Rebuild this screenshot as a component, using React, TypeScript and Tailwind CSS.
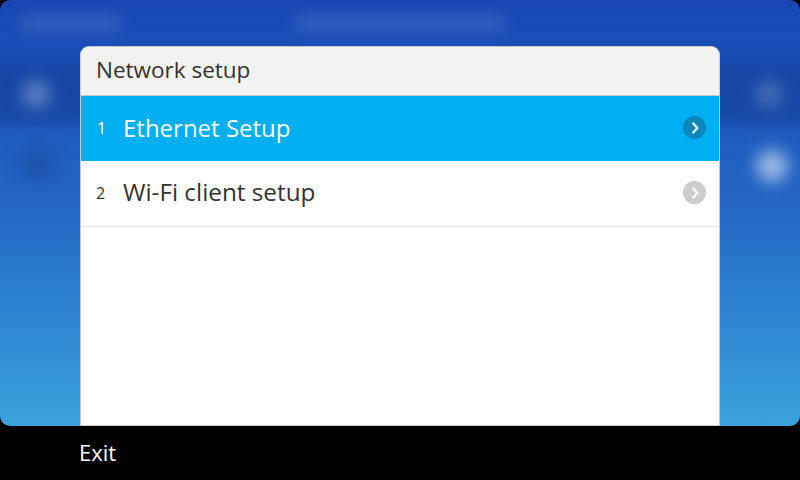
import React from "react";

function Chevron({ bg }: { bg: string }) {
  return (
    <div className={`flex h-[23px] w-[23px] items-center justify-center rounded-full ${bg}`}>
      <svg width="10" height="12" viewBox="0 0 10 12" fill="none">
        <path d="M3.2 1.5 L7.4 6 L3.2 10.5" stroke="white" strokeWidth="2.2" strokeLinecap="round" strokeLinejoin="round" />
      </svg>
    </div>
  );
}

export default function App() {
  return (
    <div
      className="flex h-[480px] w-[800px] flex-col overflow-hidden bg-black"
      style={{ fontFamily: '"Open Sans", "Noto Sans", sans-serif' }}
    >
      <div className="relative flex h-[426px] flex-col overflow-hidden rounded-[10px] bg-gradient-to-b from-[#1847b4] via-[#2468c6] to-[#3aa2dc]">
        {/* blurred background UI */}
        <div className="pointer-events-none absolute inset-0 blur-[8px]">
          <div className="absolute left-[20px] top-[16px] h-[14px] w-[100px] rounded bg-white/15" />
          <div className="absolute left-[295px] top-[16px] h-[14px] w-[210px] rounded bg-white/15" />
          <div className="absolute left-[-10px] top-[62px] h-[62px] w-[830px] bg-[#123e98]/60" />
          <div className="absolute left-[22px] top-[80px] h-[28px] w-[28px] rounded-full bg-white/30" />
          <div className="absolute left-[755px] top-[80px] h-[28px] w-[28px] rounded-full bg-white/20" />
          <div className="absolute left-[20px] top-[148px] h-[34px] w-[34px] rounded-full bg-[#1a4aa0]/60" />
          <div className="absolute left-[756px] top-[150px] h-[32px] w-[32px] rounded-full bg-white/55" />
        </div>

        <div className="relative mx-[80px] mt-[46px] flex flex-1 flex-col overflow-hidden rounded-t-[9px] border-x border-t border-[#c9c9c9] bg-white">
          <div className="flex h-[49px] items-center border-b border-[#c8c8c8] bg-[#f2f2f2] pb-[3px] pl-[15px] text-[22.5px] text-[#333333]">
            Network setup
          </div>
          <div className="flex h-[65px] items-center bg-[#00aff2] pb-[2px] pr-[13px] text-white">
            <span className="w-[42px] pl-[16px] text-[16px]">1</span>
            <span className="flex-1 text-[24px]">Ethernet Setup</span>
            <Chevron bg="bg-[#0a88bd]" />
          </div>
          <div className="flex h-[66px] items-center border-b border-[#e3e3e3] pb-[2px] pr-[13px] text-[#333333]">
            <span className="w-[42px] pl-[15px] text-[16px]">2</span>
            <span className="flex-1 text-[24.3px]">Wi-Fi client setup</span>
            <Chevron bg="bg-[#cccccc]" />
          </div>
          <div className="flex-1" />
          <div className="h-px bg-[#c8c8c8]" />
        </div>
      </div>
      <div className="flex flex-1 items-center pb-[2px] pl-[79px] text-[22px] text-white">Exit</div>
    </div>
  );
}
